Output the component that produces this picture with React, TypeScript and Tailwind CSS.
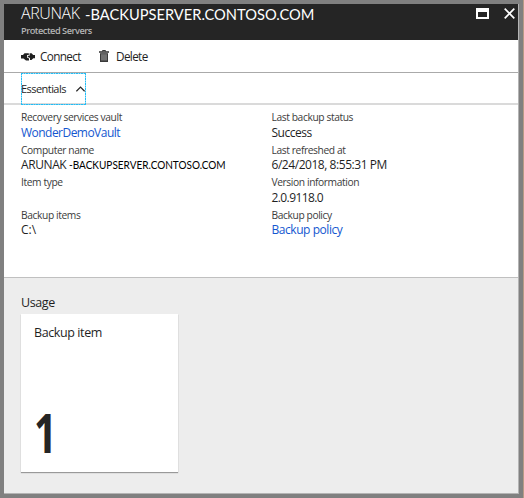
const sans = "font-['Open_Sans','Noto_Sans',sans-serif]";
const lato = "font-['Lato',sans-serif]";

function Field({ label, children }: { label: string; children?: React.ReactNode }) {
  return (
    <div className="h-[32.5px]">
      <div className="h-[14.5px] text-[10.25px] leading-[15px] tracking-[-0.4px] text-[#3c3c3c]">{label}</div>
      <div className="h-[15px] text-[12px] leading-[15px]">{children}</div>
    </div>
  );
}

function ConnectIcon() {
  return (
    <svg className="h-[11px] w-[14px]" viewBox="0 0 14 11" fill="#202020">
      <path d="M0 4h2L3.500 2.200h4.300V4H6v2.500l2 1V9.500H5L2.500 7.500H0z" />
      <path d="M14 4h-1.800L10.600 2.200H8.600v2.600H6.800v1.200L9 7V9h1.500l1.800-1.700H14z" />
    </svg>
  );
}

function TrashIcon() {
  return (
    <svg className="h-[12px] w-[10px]" viewBox="0 0 10 12" fill="none">
      <path d="M3.500 1.500V.5h3v1" stroke="#3a3a3a" />
      <path d="M0 1.200h10v1.600H0z" fill="#3a3a3a" />
      <path d="M1 3.200h8V12H1z" fill="#3a3a3a" />
      <path d="M3 4.200v6.300M5 4.200v6.300M7 4.200v6.300" stroke="#c8c8c8" strokeWidth=".8" />
    </svg>
  );
}

export default function App() {
  return (
    <div className={`h-[498px] w-[524px] overflow-hidden border-r border-[#b99a85] bg-[#808080] pt-1 pl-1 text-[#1f1f1f] ${sans}`}>
      <div className="flex h-[490px] w-[515px] flex-col whitespace-nowrap border-r border-b border-[#b4b4b4] bg-white">
        <header className="flex h-9 shrink-0 justify-between bg-[#252525] text-white">
          <div className="pl-[17px]">
            <h1 className="flex h-[19px] text-[16px] leading-[19px]">
              <span className="w-[64px] font-light tracking-[-0.4px]">ARUNAK</span>
              <span className={`w-[230px] origin-left scale-x-[0.916] text-[16px] leading-[19px] ${lato}`}>-BACKUPSERVER.CONTOSO.COM</span>
            </h1>
            <p className="text-[9.25px] font-semibold leading-[15px] tracking-[-0.5px] text-[#b4b4b4]">Protected Servers</p>
          </div>
          <div className="flex gap-[15px] pr-[3px] pt-1">
            <svg className="h-[11px] w-[13px]" viewBox="0 0 13 11"><path fill="#fff" fillRule="evenodd" d="M0 0h13v11H0zM2 4v5h9V4z" /></svg>
            <svg className="h-[11px] w-[11px]" viewBox="0 0 11 11"><path stroke="#fff" strokeWidth="1.700" d="M.7.7l9.600 9.600M10.300.7L.7 10.300" /></svg>
          </div>
        </header>
        <div className="flex h-[33px] shrink-0 items-center border-b border-[#aaa] pl-[17px] text-[12px]">
          <ConnectIcon />
          <span className="ml-[5px] mt-px w-[59px] text-[11.75px] tracking-[-0.65px]">Connect</span>
          <TrashIcon />
          <span className="ml-[7px] mt-px text-[11.75px] tracking-[-0.65px]">Delete</span>
        </div>
        <div className="h-8 shrink-0 border-b-2 border-[#dadada] pl-[17px]">
          <div className="relative flex h-[32px] w-[65px] items-center text-[11px]">
            <span className="w-[55px] shrink-0 tracking-[-0.55px]">Essentials</span>
            <svg className="h-[6px] w-[9px] shrink-0" viewBox="0 0 9 6" fill="none"><path stroke="#252525" strokeWidth="1.200" d="M.4 5.300L4.500 1l4.100 4.300" /></svg>
            <svg className="absolute inset-0 h-[32px] w-[65px]" viewBox="0 0 65 32" fill="none">
              <path d="M0 .5h65M0 31.500h65M.5 0v32M64.500 0v32" stroke="#22bdf6" strokeDasharray="2 .5" />
            </svg>
          </div>
        </div>
        <section className="grid h-[173px] shrink-0 grid-cols-[250.500px_1fr] border-b border-[#c0c0c0] pl-[17px] pt-[5px]">
          <div>
            <Field label="Recovery services vault"><a className="tracking-[-0.53px] text-[#1457d0]">WonderDemoVault</a></Field>
            <Field label="Computer name">
              <span className="inline-block w-[48px] tracking-[-0.4px]">ARUNAK</span>
              <span className={`inline-block origin-left scale-x-[0.89] text-[11.250px] text-black ${lato}`}>-BACKUPSERVER.CONTOSO.COM</span>
            </Field>
            <Field label="Item type" />
            <Field label="Backup items">C:\</Field>
          </div>
          <div>
            <Field label="Last backup status"><span className="tracking-[-0.5px]">Success</span></Field>
            <Field label="Last refreshed at"><span className="tracking-[-0.45px]">6/24/2018, 8:55:31 PM</span></Field>
            <Field label="Version information"><span className="tracking-[-0.6px]">2.0.9118.0</span></Field>
            <Field label="Backup policy"><a className="tracking-[-0.45px] text-[#1457d0]">Backup policy</a></Field>
          </div>
        </section>
        <section className="flex-1 bg-[#ededed] pl-[17px] pt-[16px]">
          <h2 className="h-5 text-[12.5px] leading-[18px] tracking-[-0.4px]">Usage</h2>
          <div className="flex h-[158px] w-[157px] flex-col justify-between bg-white pb-[7px] pl-[13px] pt-[10px] shadow-[0_1px_1px_#999]">
            <span className="text-[12.500px] leading-[18px] tracking-[-0.4px]">Backup item</span>
            <span className="h-[66px] w-[30px] origin-left scale-x-[0.74] text-[54px] font-bold leading-[66px] text-[#252525]">1</span>
          </div>
        </section>
      </div>
    </div>
  );
}
